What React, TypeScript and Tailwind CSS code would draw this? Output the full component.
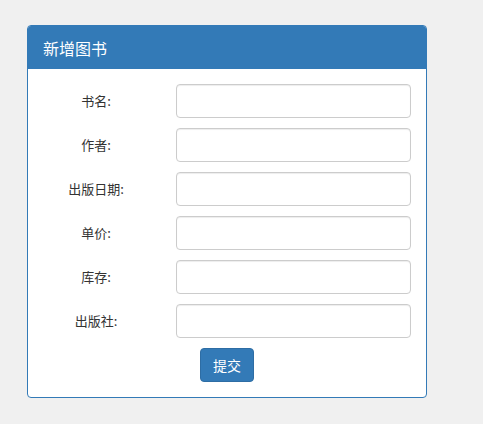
const fields = ["书名:", "作者:", "出版日期:", "单价:", "库存:", "出版社:"];

export default function App() {
  return (
    <div
      className="w-[483px] h-[424px] bg-[#f0f0f0] pt-[25px] pl-[27px]"
      style={{ fontFamily: '"Microsoft YaHei", "Noto Sans CJK SC", sans-serif' }}
    >
      <div className="w-[400px] bg-white border border-[#337ab7] rounded-[4px] overflow-hidden">
        <div className="h-[43px] bg-[#337ab7] flex items-center px-[15px] text-white text-[16px]">
          新增图书
        </div>
        <form className="px-[15px] py-[15px] flex flex-col gap-[10px]" onSubmit={(e) => e.preventDefault()}>
          {fields.map((f) => (
            <div key={f} className="flex items-center">
              <label className="w-[106px] text-center text-[13px] text-[#333]">{f}</label>
              <input
                type="text"
                className="ml-[27px] w-[235px] h-[34px] border border-[#ccc] rounded-[4px] bg-white shadow-[inset_0_1px_1px_rgba(0,0,0,0.075)] outline-none"
              />
            </div>
          ))}
          <div className="pl-[157px]">
            <button
              type="submit"
              className="w-[54px] h-[34px] bg-[#337ab7] border border-[#2e6da4] rounded-[4px] text-white text-[14px]"
            >
              提交
            </button>
          </div>
        </form>
      </div>
    </div>
  );
}
